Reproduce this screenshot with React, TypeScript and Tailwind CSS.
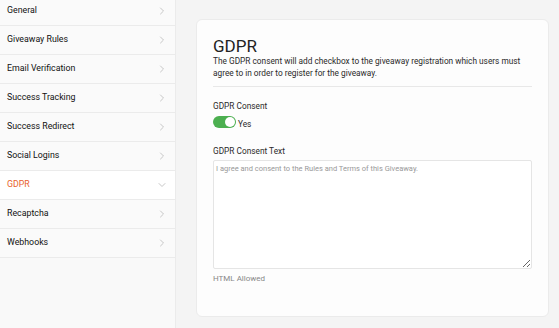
import React from "react";

const items = [
  "General",
  "Giveaway Rules",
  "Email Verification",
  "Success Tracking",
  "Success Redirect",
  "Social Logins",
  "GDPR",
  "Recaptcha",
  "Webhooks",
];

function Chevron({ down }: { down?: boolean }) {
  return (
    <svg width="8" height="8" viewBox="0 0 8 8" fill="none" stroke="#c6c6c6" strokeWidth="1" strokeLinecap="round" strokeLinejoin="round">
      {down ? <path d="M1 2.5 L4 5.5 L7 2.5" /> : <path d="M2.5 1 L5.5 4 L2.5 7" />}
    </svg>
  );
}

export default function App() {
  return (
    <div
      className="flex w-[559px] h-[328px] overflow-hidden bg-[#f4f4f4]"
      style={{ fontFamily: "Roboto, 'Liberation Sans', Arial, sans-serif" }}
    >
      <div className="w-[176px] h-[332px] bg-[#f9f9f9] border-r border-[#ebebeb] flex flex-col -mt-[3px] shrink-0">
        {items.map((it) => {
          const active = it === "GDPR";
          return (
            <div
              key={it}
              className={`h-[29px] shrink-0 flex items-center justify-between pl-[7px] pr-[9px] border-b border-[#ebebeb] ${active ? "bg-white" : "bg-[#fafafa]"}`}
            >
              <span className={`text-[8.8px] ${active ? "text-[#e8622d]" : "text-[#111]"}`}>{it}</span>
              <Chevron down={active} />
            </div>
          );
        })}
      </div>
      <div className="flex-1 pl-[20px] pr-[10px] pt-[19px] pb-[11px]">
        <div className="h-full bg-[#fdfdfd] border border-[#ebebeb] rounded-[6px] pl-[16px] pr-[16px] pt-[18px] flex flex-col">
          <div className="text-[17px] leading-[16px] text-[#222]">GDPR</div>
          <div className="text-[8.3px] leading-[12px] text-[#2a2a2a] mt-[1px]">
            The GDPR consent will add checkbox to the giveaway registration which users must agree to in order to register for the giveaway.
          </div>
          <div className="border-b border-[#e8e8e8] mt-[7px]" />
          <div className="text-[8.3px] text-[#2a2a2a] mt-[14px] leading-[10px]">GDPR Consent</div>
          <div className="flex items-center mt-[5px] gap-[2px] h-[12px]">
            <div className="w-[23px] h-[12px] rounded-full bg-[#4caf50] flex items-center justify-end pr-[1px]">
              <div className="w-[10px] h-[10px] rounded-full bg-white" />
            </div>
            <span className="text-[8.3px] leading-[10px] text-[#2a2a2a] pt-[3px]">Yes</span>
          </div>
          <div className="text-[8.3px] text-[#2a2a2a] mt-[18px] leading-[10px]">GDPR Consent Text</div>
          <textarea
            className="mt-[4px] w-full h-[109px] border border-[#e5e5e5] rounded-[2px] bg-white px-[2px] py-[3px] text-[7.5px] leading-[9px] text-[#333] placeholder:text-[#999] outline-none resize-y"
            placeholder="I agree and consent to the Rules and Terms of this Giveaway."
          />
          <div className="text-[8px] leading-[10px] text-[#888] mt-[5px]">HTML Allowed</div>
        </div>
      </div>
    </div>
  );
}
